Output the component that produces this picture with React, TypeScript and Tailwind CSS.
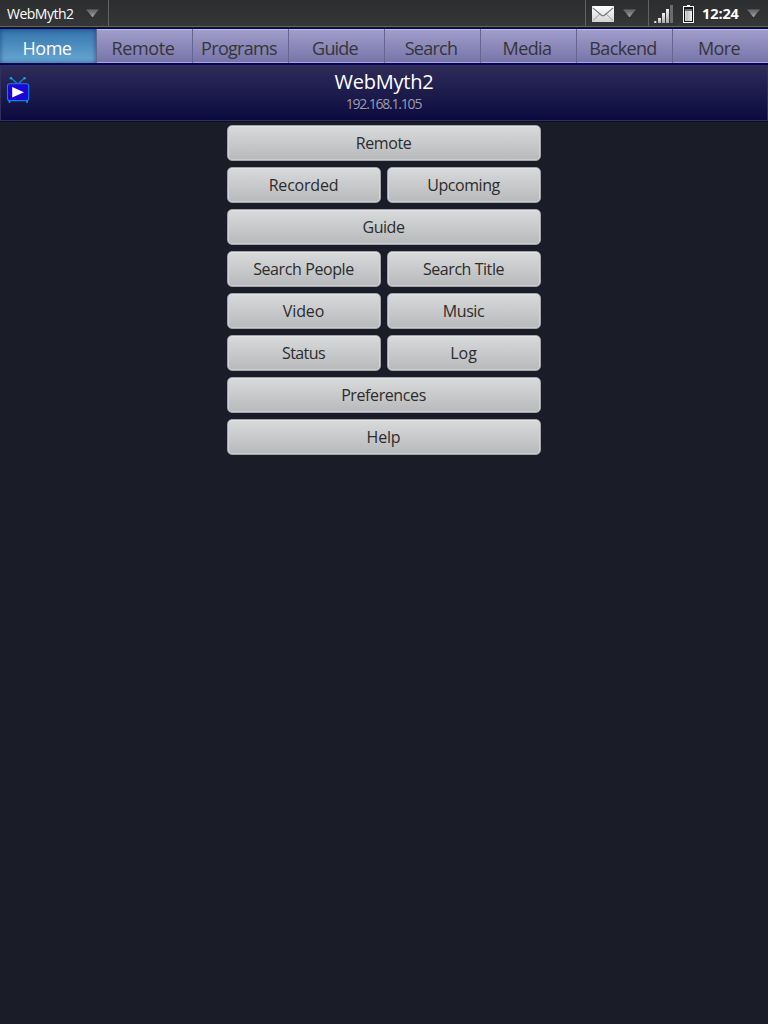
type Label = { text: string; tracking: string };

const tabs: Label[] = [
  { text: "Home", tracking: "tracking-[-0.45px]" },
  { text: "Remote", tracking: "tracking-[-0.4px]" },
  { text: "Programs", tracking: "tracking-[-0.7px]" },
  { text: "Guide", tracking: "tracking-[-0.8px]" },
  { text: "Search", tracking: "tracking-[-0.75px]" },
  { text: "Media", tracking: "tracking-[-0.6px]" },
  { text: "Backend", tracking: "tracking-[-0.65px]" },
  { text: "More", tracking: "tracking-[-0.6px]" },
];

const rows: Label[][] = [
  [{ text: "Remote", tracking: "tracking-[-0.4px]" }],
  [
    { text: "Recorded", tracking: "tracking-[-0.2px]" },
    { text: "Upcoming", tracking: "tracking-[-0.45px]" },
  ],
  [{ text: "Guide", tracking: "tracking-[-0.5px]" }],
  [
    { text: "Search People", tracking: "tracking-[-0.4px]" },
    { text: "Search Title", tracking: "tracking-[-0.45px]" },
  ],
  [
    { text: "Video", tracking: "tracking-[-0.1px]" },
    { text: "Music", tracking: "tracking-[-0.45px]" },
  ],
  [
    { text: "Status", tracking: "tracking-[-0.6px]" },
    { text: "Log", tracking: "tracking-[0px]" },
  ],
  [{ text: "Preferences", tracking: "tracking-[-0.4px]" }],
  [{ text: "Help", tracking: "tracking-[-0.2px]" }],
];

function Arrow() {
  return (
    <svg width="13" height="9" viewBox="0 0 14 9" className="block shrink-0">
      <defs>
        <linearGradient id="arrow" x1="0" y1="0" x2="0" y2="1">
          <stop offset="0" stopColor="#606060" />
          <stop offset="1" stopColor="#a6a6a6" />
        </linearGradient>
      </defs>
      <path d="M1 1h12L7.6 7.9a.8.8 0 0 1-1.2 0z" fill="url(#arrow)" />
      <path d="M0.5 .8h13" stroke="#909090" strokeWidth=".8" />
    </svg>
  );
}

function Mail() {
  return (
    <svg width="22" height="16" viewBox="0 0 22 16" className="block shrink-0">
      <defs>
        <linearGradient id="mail" x1="0" y1="0" x2="0" y2="1">
          <stop offset="0" stopColor="#ffffff" />
          <stop offset="1" stopColor="#d4d4d4" />
        </linearGradient>
      </defs>
      <rect width="22" height="16" rx=".6" fill="url(#mail)" />
      <path d="M1 14.5 8.3 7.5M21 14.5 13.7 7.5" stroke="#999" strokeWidth=".9" fill="none" />
      <path d="M.8 1.8 9.2 9q1.8 1.5 3.6 0l8.4-7.2" stroke="#777" strokeWidth="1.1" fill="none" />
    </svg>
  );
}

function Signal() {
  return (
    <svg width="20" height="18" viewBox="0 0 20 18" className="block shrink-0">
      <defs>
        <linearGradient id="bars" x1="0" y1="0" x2="0" y2="1">
          <stop offset="0" stopColor="#f4f4f4" />
          <stop offset="1" stopColor="#a8a8a8" />
        </linearGradient>
      </defs>
      <rect x="0.3" y="16" width="2" height="2" fill="#e4e4e4" />
      <rect x="4" y="13" width="3" height="5" fill="url(#bars)" />
      <rect x="8" y="8" width="3" height="10" fill="url(#bars)" />
      <rect x="12" y="4" width="3" height="14" fill="url(#bars)" />
      <rect x="16" y="0" width="3" height="18" fill="#6c6c6c" />
    </svg>
  );
}

function Battery() {
  return (
    <svg width="11" height="18" viewBox="0 0 11 18" className="block shrink-0">
      <defs>
        <linearGradient id="charge" x1="0" y1="0" x2="1" y2="0">
          <stop offset="0" stopColor="#dedede" />
          <stop offset=".3" stopColor="#bcbcbc" />
          <stop offset="1" stopColor="#f5f5f5" />
        </linearGradient>
      </defs>
      <rect x="4" y="0" width="3" height="2" fill="#fff" />
      <rect x=".5" y="1.5" width="10" height="16" fill="#171717" stroke="#fff" strokeWidth="1" />
      <rect x="2" y="6" width="7" height="10" fill="url(#charge)" />
      <rect x="2" y="4" width="7" height="2" fill="#6a6a6a" />
    </svg>
  );
}

function TvLogo() {
  return (
    <svg width="24" height="28" viewBox="0 0 24 28" className="block shrink-0">
      <g stroke="#1480cc" strokeWidth="1.3" fill="none" strokeLinecap="round">
        <path d="M5 2 10.7 7M18.5 2 13 7" />
        <path d="M3.5 25v1.2M21 25v1.2" stroke="#1496dc" strokeWidth="1.8" />
      </g>
      <circle cx="5" cy="2.2" r="1.3" fill="#169de6" />
      <circle cx="18.6" cy="2.2" r="1.3" fill="#169de6" />
      <rect x="1.5" y="7.7" width="21.2" height="16.9" rx="2" fill="#1b05d8" stroke="#1480dc" strokeWidth="1.1" />
      <path d="M6.2 11v10.6l11.8-5.3z" fill="#fff" />
    </svg>
  );
}

export default function App() {
  return (
    <div className="min-h-screen w-full bg-[#1a1c27] font-['Open_Sans','Noto_Sans',sans-serif]">
      <div className="flex h-7 w-full border-b border-[#171717] bg-linear-to-b from-[#2b2d2e] to-[#343637] text-white">
        <div className="flex w-[109px] items-center justify-between border-r border-b border-[#626262] pt-px pr-[9px] pl-[7px]">
          <span className="text-[14px] leading-5 tracking-[-0.5px]">WebMyth2</span>
          <Arrow />
        </div>
        <div className="grow border-b border-[#626262]" />
        <div className="flex w-[63px] items-center gap-[9px] border-b border-l border-[#626262] pt-px pl-[6px]">
          <Mail />
          <Arrow />
        </div>
        <div className="flex w-[120px] items-center border-b border-l border-[#626262] pt-px pl-[5px]">
          <Signal />
          <div className="ml-[9px]">
            <Battery />
          </div>
          <span className="ml-2 w-[37px] text-[14.5px] leading-5 font-bold tracking-[-0.1px]">12:24</span>
          <div className="ml-2">
            <Arrow />
          </div>
        </div>
      </div>
      <nav className="grid h-[37px] grid-cols-8 border-t border-b-2 border-[#05045c]">
        {tabs.map((tab, i) => (
          <div
            key={tab.text}
            className={
              i === 0
                ? "flex items-center justify-center bg-linear-to-b from-[#3273ac] to-[#69a9d4] pt-1 pr-[2px] text-[18px] leading-6 text-white shadow-[inset_0_0_5px_rgba(0,40,90,0.6)]"
                : "flex items-center justify-center border-l border-[#67648f] bg-linear-to-b from-[#a29fcb] to-[#7673a9] pt-1 pr-[3px] text-[18px] leading-6 text-[#353539] shadow-[inset_0_1px_0_#c0bde0,inset_0_-1px_0_#aaa7d2]"
            }
          >
            <span className={tab.tracking}>{tab.text}</span>
          </div>
        ))}
      </nav>
      <header className="grid h-14 grid-cols-[1fr_auto_1fr] border border-[#30305f] bg-linear-to-b from-[#2f2b58] to-[#0b0a40] shadow-[0_1px_0_#0c0c22]">
        <div className="pt-[10px] pl-[5px]">
          <TvLogo />
        </div>
        <div className="flex flex-col items-center pt-0.5">
          <h1 className="text-[20px] leading-7 tracking-[-0.2px] text-white">WebMyth2</h1>
          <p className="pr-px text-[14px] leading-4 tracking-[-1.2px] text-[#9d9dab]">192.168.1.105</p>
        </div>
        <div />
      </header>
      <main className="mx-auto flex w-[314px] flex-col gap-1.5 pt-1">
        {rows.map((row, i) => (
          <div key={i} className="flex gap-1.5">
            {row.map((item) => (
              <button
                key={item.text}
                className="flex h-9 flex-1 items-center justify-center rounded-[5px] border border-[#a2a2a8] bg-linear-to-b from-[#d9dadb] to-[#b8b9bb] pr-px pb-px text-[16px] leading-5 text-[#2c2c2c] shadow-[inset_0_1px_0_#e4e4e4,inset_0_-1px_0_#cdcdcf,inset_1px_0_0_#d5d5d7,inset_-1px_0_0_#d5d5d7]"
              >
                <span className={item.tracking}>{item.text}</span>
              </button>
            ))}
          </div>
        ))}
      </main>
    </div>
  );
}
